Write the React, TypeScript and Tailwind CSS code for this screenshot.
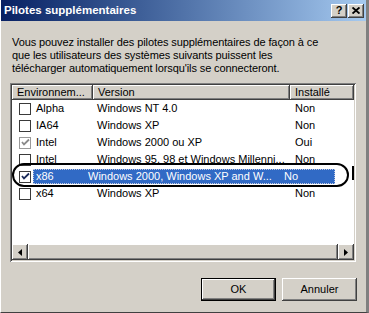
import React from "react";

type Row = {
  env: string;
  ver: string;
  inst: string;
  check: "off" | "on" | "grey";
  selected?: boolean;
};

const rows: Row[] = [
  { env: "Alpha", ver: "Windows NT 4.0", inst: "Non", check: "off" },
  { env: "IA64", ver: "Windows XP", inst: "Non", check: "off" },
  { env: "Intel", ver: "Windows 2000 ou XP", inst: "Oui", check: "grey" },
  { env: "Intel", ver: "Windows 95, 98 et Windows Millenni...", inst: "Non", check: "off" },
  { env: "x86", ver: "Windows 2000, Windows XP and W...", inst: "No", check: "on", selected: true },
  { env: "x64", ver: "Windows XP", inst: "Non", check: "off" },
];

const raised =
  "shadow-[inset_-1px_-1px_#404040,inset_1px_1px_#ffffff,inset_-2px_-2px_#808080,inset_2px_2px_#d4d0c8]";

const CheckBox: React.FC<{ state: Row["check"] }> = ({ state }) => (
  <span
    className={`w-[12px] h-[12px] shrink-0 bg-white border flex items-center justify-center ${
      state === "grey" ? "border-[#9a9a9a]" : "border-[#3a3a3a]"
    }`}
  >
    {state !== "off" && (
      <svg width="9" height="9" viewBox="0 0 9 9">
        <path
          d="M1 4 L3 6.5 L8 1.5"
          fill="none"
          stroke={state === "grey" ? "#8a8a8a" : "#1a2a5a"}
          strokeWidth="1.8"
        />
      </svg>
    )}
  </span>
);

const Arrow: React.FC<{ dir: "left" | "right" }> = ({ dir }) => (
  <div className={`w-[16px] h-[16px] shrink-0 bg-[#d4d0c8] flex items-center justify-center ${raised}`}>
    <svg width="4" height="7" viewBox="0 0 4 7">
      <path d={dir === "left" ? "M4 0 L0 3.5 L4 7 Z" : "M0 0 L4 3.5 L0 7 Z"} fill="#000" />
    </svg>
  </div>
);

const App: React.FC = () => {
  return (
    <div className="w-[369px] h-[313px] bg-[#d4d0c8] relative flex flex-col border-l border-l-white border-r-[3px] border-r-[#808080] border-b border-b-[#404040] font-['Liberation_Sans',Arial,sans-serif] text-[11px] text-black overflow-hidden">
      {/* title bar */}
      <div className="h-[21px] shrink-0 flex items-center justify-between pl-[3px] pr-[2px] bg-gradient-to-r from-[#082063] to-[#a6caf0]">
        <span className="text-white font-bold text-[11.5px]">Pilotes supplémentaires</span>
        <div className="flex gap-[1px]">
          <div className={`w-[16px] h-[14px] bg-[#d4d0c8] flex items-center justify-center font-bold text-[11px] leading-none ${raised}`}>
            ?
          </div>
          <div className={`w-[16px] h-[14px] bg-[#d4d0c8] flex items-center justify-center ${raised}`}>
            <svg width="8" height="7" viewBox="0 0 8 7">
              <path d="M0.5 0.5 L7.5 6.5 M7.5 0.5 L0.5 6.5" stroke="#000" strokeWidth="1.9" />
            </svg>
          </div>
        </div>
      </div>

      <p className="ml-[11px] mt-[15px] leading-[13px] whitespace-nowrap tracking-[-0.1px]">
        Vous pouvez installer des pilotes supplémentaires de façon à ce
        <br />
        que les utilisateurs des systèmes suivants puissent les
        <br />
        télécharger automatiquement lorsqu'ils se connecteront.
      </p>

      {/* list view */}
      <div className="ml-[9px] mt-[8px] w-[346px] h-[179px] p-[2px] bg-white flex flex-col shadow-[inset_1px_1px_#808080,inset_-1px_-1px_#ffffff,inset_2px_2px_#404040,inset_-2px_-2px_#d4d0c8]">
        <div className="flex h-[15px] shrink-0 bg-[#d4d0c8]">
          {[
            ["Environnem...", "w-[81px]"],
            ["Version", "w-[197px]"],
            ["Installé", "flex-1"],
          ].map(([label, w]) => (
            <div
              key={label}
              className={`${w} h-full pl-[5px] flex items-center whitespace-nowrap shadow-[inset_-1px_-1px_#404040,inset_1px_1px_#ffffff,inset_-2px_-2px_#808080]`}
            >
              {label}
            </div>
          ))}
        </div>

        <div className="flex-1">
          {rows.map((r, i) => (
            <div key={i} className="h-[17px] flex items-center">
              <div className="w-[81px] pl-[7px] flex items-center shrink-0">
                <CheckBox state={r.check} />
                {!r.selected && <span className="ml-[5px]">{r.env}</span>}
              </div>
              {r.selected ? (
                <div className="-ml-[60px] w-[302px] h-[15px] bg-[#316ac5] text-white flex items-center outline outline-1 outline-dotted outline-[#c0c8e0] -outline-offset-1">
                  <span className="w-[55px] pl-[3px]">{r.env}</span>
                  <span className="w-[196px] whitespace-nowrap">{r.ver}</span>
                  <span>{r.inst}</span>
                </div>
              ) : (
                <>
                  <div className="w-[197px] pl-[4px] whitespace-nowrap overflow-hidden shrink-0">{r.ver}</div>
                  <div className="pl-[5px]">{r.inst}</div>
                </>
              )}
            </div>
          ))}
        </div>

        {/* horizontal scrollbar */}
        <div className="h-[16px] shrink-0 flex bg-[#e8e6e2]">
          <Arrow dir="left" />
          <div className={`flex-1 bg-[#d4d0c8] ${raised}`} />
          <Arrow dir="right" />
        </div>
      </div>

      {/* buttons */}
      <div className="mt-[16px] flex justify-end gap-[6px] pr-[9px]">
        <button className="w-[75px] h-[23px] border border-black bg-[#d4d0c8]">
          <div className={`w-full h-full flex items-center justify-center ${raised}`}>OK</div>
        </button>
        <button className={`w-[75px] h-[23px] bg-[#d4d0c8] flex items-center justify-center ${raised}`}>
          Annuler
        </button>
      </div>

      {/* hand-drawn highlight ring */}
      <div className="absolute left-[11px] top-[163px] w-[337px] h-[24px] rounded-[13px] border-2 border-black pointer-events-none" />
      <div className="absolute left-[351px] top-[166px] w-[2px] h-[14px] bg-black pointer-events-none" />
    </div>
  );
};

export default App;
